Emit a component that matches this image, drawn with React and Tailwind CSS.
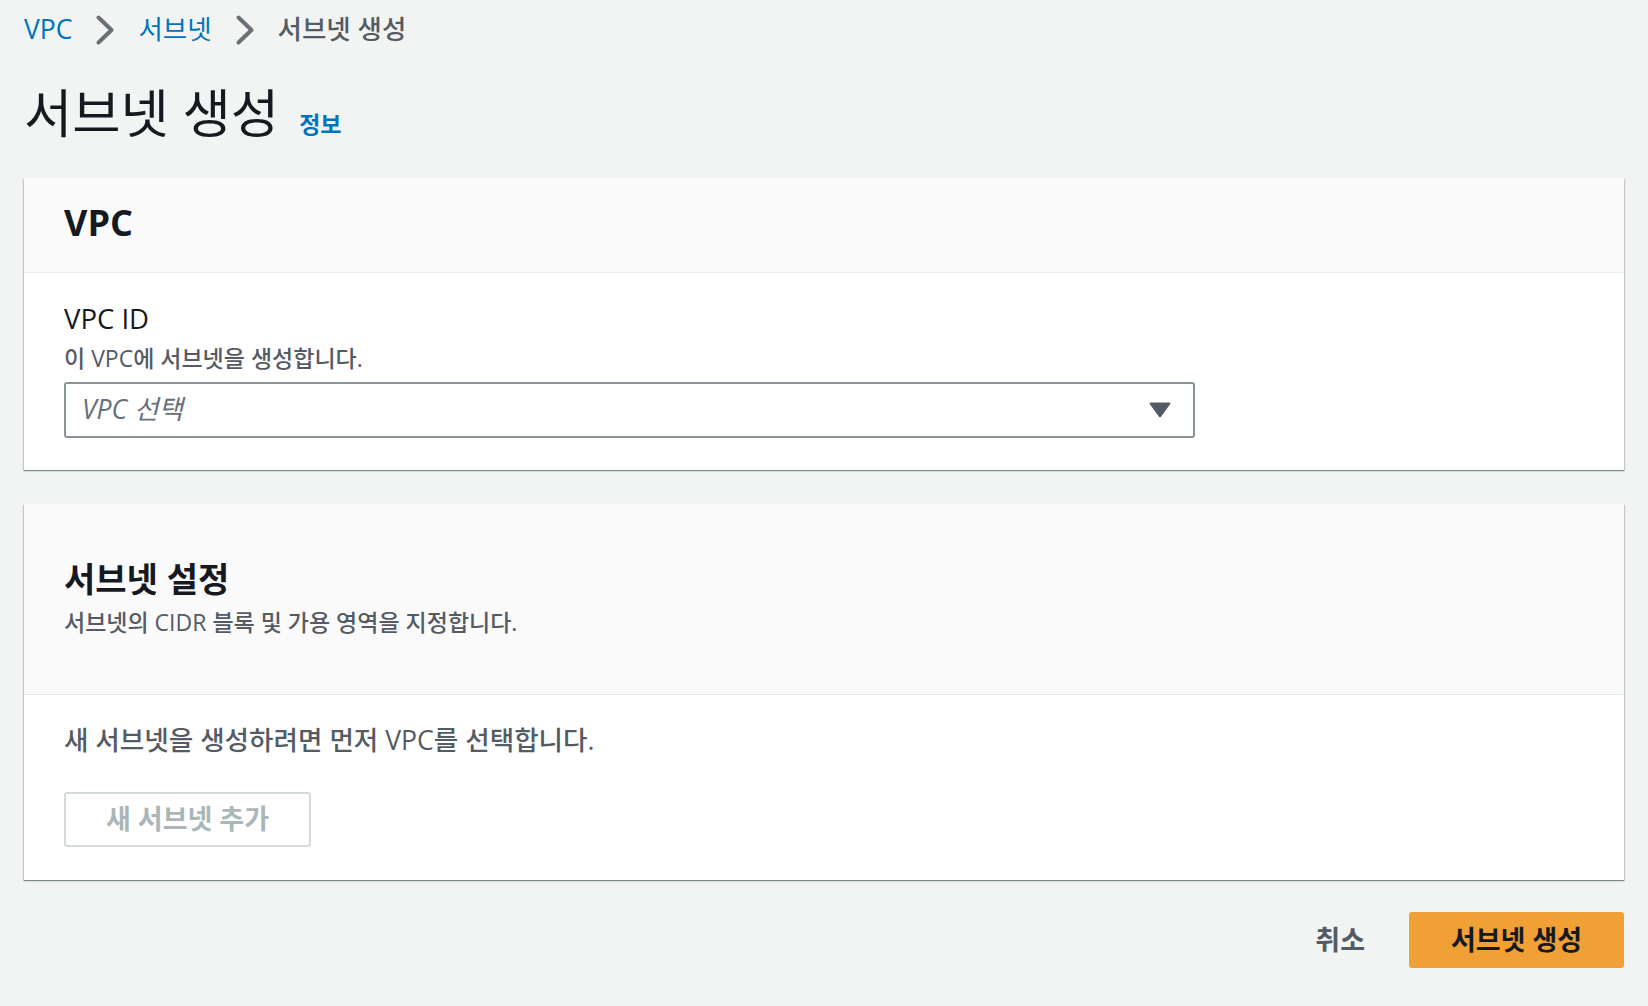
import React from 'react';

const Chevron = () => (
  <svg width="22" height="32" viewBox="0 0 22 32" className="shrink-0">
    <path d="M4.5 3.5 L17.5 16 L4.5 28.5" fill="none" stroke="#687078" strokeWidth="4" strokeLinecap="round" strokeLinejoin="round" />
  </svg>
);

const Caret = () => (
  <svg width="22" height="16" viewBox="0 0 22 16">
    <path d="M1.5 1.5 H20.5 L11 14.5 Z" fill="#545b64" stroke="#545b64" strokeWidth="2" strokeLinejoin="round" />
  </svg>
);

const Panel = ({ children }) => (
  <div className="bg-white shadow-[0_1px_1px_0_rgba(0,28,36,0.3),1px_1px_1px_0_rgba(0,28,36,0.15),-1px_1px_1px_0_rgba(0,28,36,0.15)]">
    {children}
  </div>
);

export default function App() {
  return (
    <div className="min-h-screen bg-[#f2f3f3] px-[24px] pt-[12px] pb-[40px] font-['Open_Sans','Noto_Sans_CJK_KR',sans-serif] text-[#16191f]">
      {/* breadcrumb */}
      <nav className="flex items-center gap-[22px] text-[26.5px] leading-[35px]">
        <span className="text-[#0073bb]">VPC</span>
        <Chevron />
        <span className="text-[#0073bb]">서브넷</span>
        <Chevron />
        <span className="font-medium text-[#545b64]">서브넷 생성</span>
      </nav>

      {/* title */}
      <div className="mt-[36px] flex items-baseline gap-[20px]">
        <h1 className="text-[52.5px] leading-[60px] font-normal">서브넷 생성</h1>
        <span className="text-[23px] font-bold text-[#0073bb]">정보</span>
      </div>

      {/* VPC panel */}
      <div className="mt-[35px]">
        <Panel>
          <div className="flex h-[95px] items-center border-b border-[#eaeded] bg-[#fafafa] px-[40px]">
            <h2 className="text-[36px] font-bold leading-[44px] -mt-[4px]">VPC</h2>
          </div>
          <div className="px-[40px] pt-[28px] pb-[32px]">
            <div className="text-[27.5px] font-medium leading-[36px]">VPC ID</div>
            <div className="mt-[6px] text-[23px] font-medium leading-[30px] text-[#545b64]">이 VPC에 서브넷을 생성합니다.</div>
            <div className="mt-[9px] flex h-[56px] w-[1131px] items-center justify-between rounded-[3px] border-2 border-[#879596] bg-white pl-[16px] pr-[22px]">
              <span className="text-[26.5px] italic text-[#687078]">VPC 선택</span>
              <Caret />
            </div>
          </div>
        </Panel>
      </div>

      {/* subnet settings panel */}
      <div className="mt-[34px]">
        <Panel>
          <div className="border-b border-[#eaeded] bg-[#fafafa] px-[40px] pt-[53px] pb-[57px]">
            <h2 className="text-[34px] font-bold leading-[44px]">서브넷 설정</h2>
            <div className="mt-[6px] text-[23px] font-medium leading-[30px] text-[#545b64]">서브넷의 CIDR 블록 및 가용 영역을 지정합니다.</div>
          </div>
          <div className="px-[40px] pt-[27px] pb-[33px]">
            <div className="text-[26.6px] font-medium leading-[36px] text-[#545b64]">새 서브넷을 생성하려면 먼저 VPC를 선택합니다.</div>
            <button className="mt-[34px] flex h-[55px] w-[247px] items-center justify-center rounded-[3px] border-2 border-[#d5dbdb] bg-white text-[27px] font-bold text-[#aab7b8]">
              새 서브넷 추가
            </button>
          </div>
        </Panel>
      </div>

      {/* footer */}
      <div className="mt-[32px] flex items-center justify-end gap-[44px]">
        <button className="text-[27px] font-bold text-[#545b64]">취소</button>
        <button className="flex h-[56px] w-[215px] items-center justify-center rounded-[3px] bg-[#f0a034] text-[27px] font-bold text-[#16191f]">
          서브넷 생성
        </button>
      </div>
    </div>
  );
}
